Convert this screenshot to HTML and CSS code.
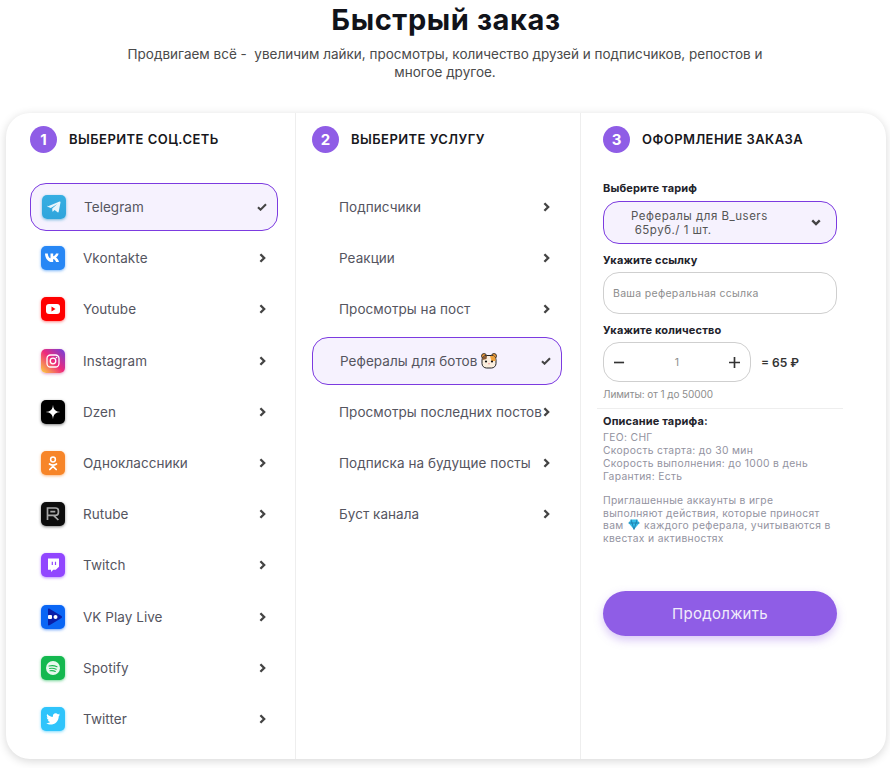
FILE: index.html
```html
<!DOCTYPE html>
<html lang="ru">
<head>
<meta charset="utf-8">
<title>Быстрый заказ</title>
<link rel="stylesheet" href="styles.css">
</head>
<body>
<header class="intro">
  <h1 class="title">Быстрый заказ</h1>
  <p class="lead">Продвигаем всё -&nbsp; увеличим лайки, просмотры, количество друзей и подписчиков, репостов и многое другое.</p>
</header>
<main class="card">
  <section class="col col-net">
    <div class="head"><span class="num">1</span><h2>Выберите соц.сеть</h2></div>
    <ul class="list">
      <li class="item active"><span class="ico tg"><svg viewBox="0 0 24 24"><path d="M5.5 11.6 17.6 6.6c.6-.2 1 .1.9.8l-1.8 9.4c-.1.6-.6.8-1.1.4l-3-2.3-1.600 1.600c-.3.3-.6.1-.6-.2l-.2-2.8 5.200-4.600-6.600 4-3.200-1.100c-.6-.2-.6-.8 0-1.200z" fill="#e8f6fc"/></svg></span><span class="label">Telegram</span><svg class="mark" viewBox="0 0 12 10"><path d="M1 5.200 4.200 8.300 11 1.500" fill="none" stroke="#444" stroke-width="2.600"/></svg></li>
      <li class="item"><span class="ico vk"><svg viewBox="0 0 24 24"><path d="M4 7.500h2.800c.2 3 1.500 4.500 2.700 4.800V7.500h2.700v2.800c1.200-.2 2.300-1.500 2.800-2.800h2.600c-.4 2-1.700 3.300-2.700 4 1.100.6 2.500 1.900 3.100 4.500h-2.900c-.5-1.600-1.600-2.800-2.900-3v3h-.4C7.500 16.500 4.200 13 4 7.500z" fill="#fff"/></svg></span><span class="label">Vkontakte</span><svg class="mark chev" viewBox="0 0 8 12"><path d="M1.500 1.500 6 6l-4.500 4.500" fill="none" stroke="#444" stroke-width="2.800"/></svg></li>
      <li class="item"><span class="ico yt"><svg viewBox="0 0 24 24"><rect x="5" y="7" width="14" height="10" rx="3" fill="#fff"/><path d="m10.500 9.500 4 2.500-4 2.500z" fill="#f00"/></svg></span><span class="label">Youtube</span><svg class="mark chev" viewBox="0 0 8 12"><path d="M1.500 1.500 6 6l-4.500 4.500" fill="none" stroke="#444" stroke-width="2.800"/></svg></li>
      <li class="item"><span class="ico ig"><svg viewBox="0 0 24 24"><rect x="6" y="6" width="12" height="12" rx="3.500" fill="none" stroke="#fff" stroke-width="1.300"/><circle cx="12" cy="12" r="2.800" fill="none" stroke="#fff" stroke-width="1.300"/><circle cx="15.500" cy="8.500" r=".8" fill="#fff"/></svg></span><span class="label">Instagram</span><svg class="mark chev" viewBox="0 0 8 12"><path d="M1.500 1.500 6 6l-4.500 4.500" fill="none" stroke="#444" stroke-width="2.800"/></svg></li>
      <li class="item"><span class="ico dz"><svg viewBox="0 0 24 24"><path d="M12 4.500c.2 5 2.500 7.300 7.500 7.500-5 .2-7.300 2.500-7.500 7.500-.2-5-2.500-7.300-7.500-7.500 5-.2 7.300-2.500 7.500-7.500z" fill="#fff"/></svg></span><span class="label">Dzen</span><svg class="mark chev" viewBox="0 0 8 12"><path d="M1.500 1.500 6 6l-4.500 4.500" fill="none" stroke="#444" stroke-width="2.800"/></svg></li>
      <li class="item"><span class="ico ok"><svg viewBox="0 0 24 24"><circle cx="12" cy="8.500" r="2.400" fill="none" stroke="#fff" stroke-width="1.500"/><path d="M8.500 13c2.200 1.400 4.800 1.400 7 0M12 14v1.500M8.800 18.500 12 15.300l3.200 3.200" fill="none" stroke="#fff" stroke-width="1.700" stroke-linecap="round"/></svg></span><span class="label">Одноклассники</span><svg class="mark chev" viewBox="0 0 8 12"><path d="M1.500 1.500 6 6l-4.500 4.500" fill="none" stroke="#444" stroke-width="2.800"/></svg></li>
      <li class="item"><span class="ico rt"><svg viewBox="0 0 24 24"><path d="M6.500 18V6h8c1.900 0 2.900 1 2.900 2.800v1.700c0 1.800-1 2.800-2.900 2.800h-8M12.500 13.300l4.900 4.700M9.300 9.700h5" fill="none" stroke="#a6a6a6" stroke-width="1.700"/></svg></span><span class="label">Rutube</span><svg class="mark chev" viewBox="0 0 8 12"><path d="M1.500 1.500 6 6l-4.500 4.500" fill="none" stroke="#444" stroke-width="2.800"/></svg></li>
      <li class="item"><span class="ico tw"><svg viewBox="0 0 24 24"><path d="M7 5.500h11v8.200l-3.200 3h-2.500L10 19v-2.300H7z" fill="#fff"/><path d="M11.300 8.700v3.400M14.500 8.700v3.400" stroke="#9146ff" stroke-width="1.200"/></svg></span><span class="label">Twitch</span><svg class="mark chev" viewBox="0 0 8 12"><path d="M1.500 1.500 6 6l-4.500 4.500" fill="none" stroke="#444" stroke-width="2.800"/></svg></li>
      <li class="item"><span class="ico vp"><svg viewBox="0 0 24 24"><path d="M7 4.500c0-.8.800-1.200 1.500-.8l12 7.400c.7.400.7 1.400 0 1.800l-12 7.400c-.7.400-1.500 0-1.500-.8z" fill="#0a1fa8"/><rect x="7" y="10" width="4" height="4" rx="1" fill="#fff"/><circle cx="14.500" cy="12" r="2" fill="#fff"/></svg></span><span class="label">VK Play Live</span><svg class="mark chev" viewBox="0 0 8 12"><path d="M1.500 1.500 6 6l-4.500 4.500" fill="none" stroke="#444" stroke-width="2.800"/></svg></li>
      <li class="item"><span class="ico sp"><svg viewBox="0 0 24 24"><circle cx="12" cy="12" r="7" fill="#e8f8ee"/><path d="M8 10c2.700-.7 5.500-.5 8 .7M8.500 12.500c2.300-.5 4.600-.3 6.700.7M9 14.800c1.900-.4 3.700-.2 5.300.6" fill="none" stroke="#1db954" stroke-width="1.100" stroke-linecap="round"/></svg></span><span class="label">Spotify</span><svg class="mark chev" viewBox="0 0 8 12"><path d="M1.500 1.500 6 6l-4.500 4.500" fill="none" stroke="#444" stroke-width="2.800"/></svg></li>
      <li class="item"><span class="ico tt"><svg viewBox="0 0 24 24"><path d="M19 7.600c-.5.200-1 .4-1.600.4.600-.3 1-.9 1.200-1.500-.5.300-1.100.6-1.800.7a2.800 2.800 0 0 0-4.800 2.600C9.700 9.700 7.600 8.600 6.200 6.900c-.8 1.300-.4 3 .9 3.800-.5 0-.9-.1-1.300-.4 0 1.400 1 2.600 2.300 2.800-.4.100-.8.100-1.300 0 .4 1.100 1.400 1.900 2.600 2-1.200.9-2.600 1.300-4.200 1.100 4.500 2.900 12.400 1.100 12.600-7.300.6-.4 1-.9 1.400-1.300z" fill="#fff"/></svg></span><span class="label">Twitter</span><svg class="mark chev" viewBox="0 0 8 12"><path d="M1.500 1.500 6 6l-4.500 4.500" fill="none" stroke="#444" stroke-width="2.800"/></svg></li>
    </ul>
  </section>
  <section class="col col-svc">
    <div class="head"><span class="num">2</span><h2>Выберите услугу</h2></div>
    <ul class="list">
      <li class="item"><span class="label">Подписчики</span><svg class="mark chev" viewBox="0 0 8 12"><path d="M1.500 1.500 6 6l-4.500 4.500" fill="none" stroke="#444" stroke-width="2.800"/></svg></li>
      <li class="item"><span class="label">Реакции</span><svg class="mark chev" viewBox="0 0 8 12"><path d="M1.500 1.500 6 6l-4.500 4.500" fill="none" stroke="#444" stroke-width="2.800"/></svg></li>
      <li class="item"><span class="label">Просмотры на пост</span><svg class="mark chev" viewBox="0 0 8 12"><path d="M1.500 1.500 6 6l-4.500 4.500" fill="none" stroke="#444" stroke-width="2.800"/></svg></li>
      <li class="item active"><span class="label">Рефералы для ботов <svg class="emoji" viewBox="0 0 16 16"><circle cx="3" cy="3" r="2.500" fill="#e8963a" stroke="#222" stroke-width=".8"/><circle cx="13" cy="3" r="2.500" fill="#e8963a" stroke="#222" stroke-width=".8"/><rect x="1" y="2.500" width="14" height="12.500" rx="4.500" fill="#fbeedd" stroke="#222" stroke-width="1"/><path d="M9 3h2.500c2 0 3 1.500 3 3.500V8L10.500 8z" fill="#f0a23c"/><path d="M1.500 7V5.500C1.500 4 3 3 4.500 3H6L5.500 6z" fill="#8a5a32"/><circle cx="5" cy="8.500" r="1.100" fill="#111"/><circle cx="11" cy="8.500" r="1.100" fill="#111"/><path d="M7 10.500h2L8 11.500z" fill="#d56"/></svg></span><svg class="mark" viewBox="0 0 12 10"><path d="M1 5.200 4.200 8.300 11 1.500" fill="none" stroke="#444" stroke-width="2.600"/></svg></li>
      <li class="item"><span class="label">Просмотры последних постов</span><svg class="mark chev" viewBox="0 0 8 12"><path d="M1.500 1.500 6 6l-4.500 4.500" fill="none" stroke="#444" stroke-width="2.800"/></svg></li>
      <li class="item"><span class="label">Подписка на будущие посты</span><svg class="mark chev" viewBox="0 0 8 12"><path d="M1.500 1.500 6 6l-4.500 4.500" fill="none" stroke="#444" stroke-width="2.800"/></svg></li>
      <li class="item"><span class="label">Буст канала</span><svg class="mark chev" viewBox="0 0 8 12"><path d="M1.500 1.500 6 6l-4.500 4.500" fill="none" stroke="#444" stroke-width="2.800"/></svg></li>
    </ul>
  </section>
  <section class="col col-order">
    <div class="head"><span class="num">3</span><h2>Оформление заказа</h2></div>
    <div class="form">
      <div class="field-label first">Выберите тариф</div>
      <div class="select"><span class="select-text">Рефералы для B_users<br>&nbsp;65руб./ 1 шт.</span><svg class="select-arrow" viewBox="0 0 12 8"><path d="M1.500 1.500 6 6l4.500-4.500" fill="none" stroke="#444" stroke-width="2.800"/></svg></div>
      <div class="field-label">Укажите ссылку</div>
      <div class="input">Ваша реферальная ссылка</div>
      <div class="field-label">Укажите количество</div>
      <div class="qty-row">
        <div class="stepper"><svg class="step" viewBox="0 0 12 12"><path d="M0 6h11" stroke="#333" stroke-width="1.800"/></svg><span class="qty">1</span><svg class="step" viewBox="0 0 12 12"><path d="M0 6h12M6 0v12" stroke="#333" stroke-width="1.800"/></svg></div>
        <span class="sum">= 65 ₽</span>
      </div>
      <div class="limits">Лимиты: от 1 до 50000</div>
    </div>
    <div class="desc">
      <div class="desc-title">Описание тарифа:</div>
      <p class="desc-specs">ГЕО: СНГ<br>Скорость старта: до 30 мин<br>Скорость выполнения: до 1000 в день<br>Гарантия: Есть</p>
      <p class="desc-text">Приглашенные аккаунты в игре выполняют действия, которые приносят вам <svg class="gem" viewBox="0 0 12 11"><path d="M3 .5h6L11.500 4 6 10.500.5 4z" fill="#35bde8"/><path d="M.5 4h11M3 .5 4 4l2 6.500L8 4 9 .5" fill="none" stroke="#176d9c" stroke-width=".7"/></svg> каждого реферала, учитываются в квестах и активностях</p>
      <button class="go" type="button">Продолжить</button>
    </div>
  </section>
</main>
</body>
</html>
```

FILE: styles.css
```css
* { box-sizing: border-box; }
html, body { margin: 0; padding: 0; }
body {
  width: 890px;
  height: 768px;
  overflow: hidden;
  background: #fff;
  font-family: Inter, "Noto Sans", sans-serif;
  color: #444;
}
.intro { height: 113px; padding-top: 2px; text-align: center; }
.title {
  margin: 0;
  padding-left: 2px;
  font-size: 29px;
  line-height: 36px;
  font-weight: 700;
  color: #11131a;
  letter-spacing: .6px;
}
.lead {
  width: 650px;
  margin: 7px auto 0 auto;
  font-size: 13.500px;
  line-height: 18px;
  color: #4a4a4a;
}
.card {
  display: grid;
  grid-template-columns: 290px 285px 305px;
  width: 880px;
  height: 646px;
  margin-left: 6px;
  background: #fff;
  border-radius: 24px;
  box-shadow: 0 2px 10px rgba(0, 0, 0, .16);
}
.col { padding-top: 13px; border-right: 1px solid #eeeeee; }
.col:last-child { border-right: 0; }
.col-net { padding-left: 24px; padding-right: 17px; }
.col-svc { padding-left: 16px; padding-right: 18px; }
.col-order { padding-left: 22px; padding-right: 49px; }
.head { display: flex; align-items: center; gap: 12px; height: 27px; }
.num {
  flex: none;
  width: 27px;
  height: 27px;
  border-radius: 50%;
  background: #8f5de6;
  color: #fff;
  font-size: 15px;
  font-weight: 700;
  line-height: 27px;
  text-align: center;
}
.head h2 {
  margin: 0;
  padding-bottom: 2px;
  font-size: 13px;
  font-weight: 600;
  text-transform: uppercase;
  color: #17171c;
  letter-spacing: .45px;
}
.list { list-style: none; margin: 30px 0 0 0; padding: 0; display: flex; flex-direction: column; gap: 3.200px; }
.item {
  display: flex;
  align-items: center;
  height: 48px;
  padding-left: 11px;
  padding-right: 12px;
  font-size: 13.500px;
  color: #55555f;
  letter-spacing: .05px;
}
.col-svc .item { padding-left: 27px; padding-right: 12px; }
.item.active {
  padding-left: 11px;
  padding-right: 10px;
  background: #f6f2fe;
  border: 1px solid #7c3be0;
  border-radius: 16px;
}
.col-svc .item.active { padding-left: 27px; padding-right: 10px; }
.label { flex: 1; white-space: nowrap; }
.mark { flex: none; width: 10px; height: 8px; }
.mark.chev { width: 7px; height: 10px; }
.ico {
  flex: none;
  width: 24px;
  height: 24px;
  margin-right: 18px;
  border-radius: 5px;
  overflow: hidden;
  display: block;
}
.ico svg { display: block; width: 24px; height: 24px; }
.tg { background: linear-gradient(180deg, #37aee2, #2fa5dc); box-shadow: 0 1px 3px rgba(30, 150, 200, .6); }
.vk { background: #2787f5; box-shadow: 0 1px 3px rgba(39, 135, 245, .6); }
.yt { background: #f00; box-shadow: 0 1px 3px rgba(255, 0, 0, .5); }
.ig { background: linear-gradient(45deg, #fbc344 5%, #ee2a7b 50%, #7a3fd4 95%); box-shadow: 0 1px 3px rgba(200, 60, 140, .5); }
.dz { background: #000; box-shadow: 0 1px 3px rgba(0, 0, 0, .5); }
.ok { background: #f78528; box-shadow: 0 1px 3px rgba(247, 133, 40, .6); }
.rt { background: #0c0c0c; box-shadow: 0 1px 3px rgba(0, 0, 0, .5); }
.tw { background: #9146ff; box-shadow: 0 1px 3px rgba(145, 70, 255, .6); }
.vp { background: #0a66f5; box-shadow: 0 1px 3px rgba(10, 102, 245, .6); }
.sp { background: #14b84f; box-shadow: 0 1px 3px rgba(20, 184, 79, .6); }
.tt { background: #2fc4fb; box-shadow: 0 1px 3px rgba(47, 196, 251, .6); }
.emoji { width: 16px; height: 16px; vertical-align: -3px; }
.form { margin-top: 29px; }
.field-label {
  margin-top: 10px;
  height: 13px;
  font-size: 11px;
  line-height: 13px;
  font-weight: 700;
  color: #22222a;
  letter-spacing: .15px;
}
.field-label.first { margin-top: 0; }
.select {
  display: flex;
  align-items: center;
  justify-content: space-between;
  height: 43px;
  margin-top: 6px;
  padding: 0 15px 0 27px;
  background: #f6f2fe;
  border: 1px solid #7c3be0;
  border-radius: 16px;
  font-size: 11.500px;
  line-height: 14px;
  color: #555;
  letter-spacing: .5px;
}
.select-arrow { width: 10px; height: 7px; }
.input {
  display: flex;
  align-items: center;
  height: 42px;
  margin-top: 5px;
  padding-left: 9px;
  border: 1px solid #cfcfcf;
  border-radius: 16px;
  font-size: 10.500px;
  color: #8d8d8d;
  letter-spacing: .3px;
}
.qty-row { display: flex; align-items: center; gap: 10px; margin-top: 5px; }
.stepper {
  display: flex;
  align-items: center;
  justify-content: space-between;
  width: 148px;
  height: 40px;
  padding: 0 10px;
  border: 1px solid #cfcfcf;
  border-radius: 16px;
  font-size: 10.500px;
  color: #8d8d8d;
}
.step { width: 11px; height: 11px; }
.sum { font-size: 12px; font-weight: 600; color: #333; }
.limits { margin-top: 6px; font-size: 10px; line-height: 12px; color: #8d8d8d; letter-spacing: -.08px; }
.desc { margin: 8px -6px 0 -6px; padding: 6px 6px 0 6px; border-top: 1px solid #eeeeee; }
.desc-title { font-size: 11px; line-height: 13px; font-weight: 700; color: #22222a; letter-spacing: .15px; }
.desc-specs, .desc-text {
  margin: 3px 0 0 0;
  font-size: 10.300px;
  line-height: 13px;
  color: #93939f;
  letter-spacing: .33px;
}
.desc-text { margin-top: 11px; line-height: 12.500px; padding-right: 6px; }
.gem { width: 12px; height: 11px; margin: 0 1px; vertical-align: -1px; }
.go {
  display: block;
  width: 234px;
  height: 45px;
  margin-top: 47px;
  border: 0;
  border-radius: 23px;
  background: #8f5de6;
  color: #f1ecfb;
  font-family: inherit;
  font-size: 15px;
  letter-spacing: .3px;
  box-shadow: 0 4px 10px rgba(143, 93, 230, .35);
}
```
